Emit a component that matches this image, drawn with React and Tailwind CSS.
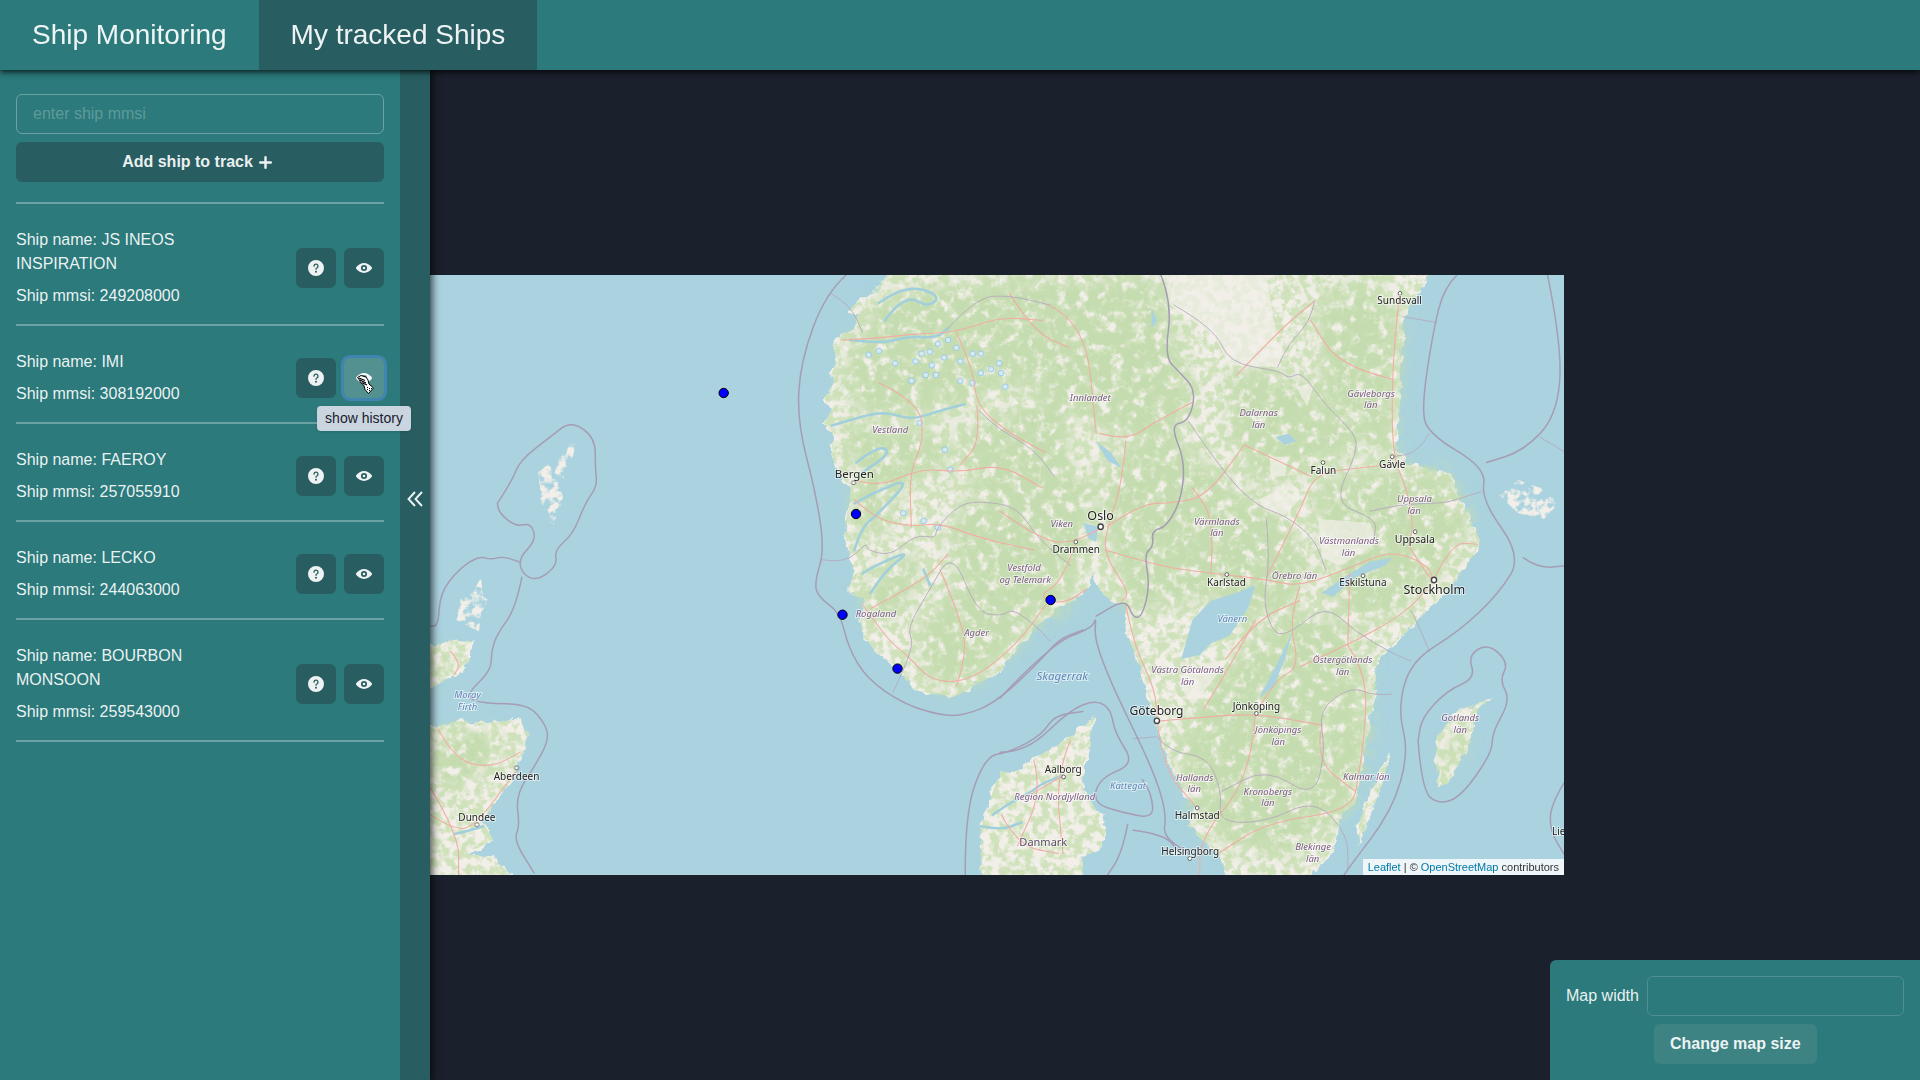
import React from 'react';

const ships = [
  { name: 'JS INEOS INSPIRATION', mmsi: '249208000' },
  { name: 'IMI', mmsi: '308192000', hovered: true },
  { name: 'FAEROY', mmsi: '257055910' },
  { name: 'LECKO', mmsi: '244063000' },
  { name: 'BOURBON MONSOON', mmsi: '259543000' },
];

function QuestionIcon() {
  return (
    <svg viewBox="0 0 24 24" className="w-4 h-4" fill="currentColor">
      <path d="M12,0A12,12,0,1,0,24,12,12.013,12.013,0,0,0,12,0Zm0,19a1.5,1.5,0,1,1,1.5-1.5A1.5,1.5,0,0,1,12,19Zm1.6-6.08a1,1,0,0,0-.6.917,1,1,0,1,1-2,0,3,3,0,0,1,1.8-2.75A2,2,0,1,0,10,9.255a1,1,0,1,1-2,0,4,4,0,1,1,5.6,3.666Z" />
    </svg>
  );
}

function ViewIcon() {
  return (
    <svg viewBox="0 0 24 24" className="w-4 h-4" fill="currentColor">
      <path d="M23.432,10.524C20.787,7.614,16.4,4.538,12,4.6,7.6,4.537,3.213,7.615.568,10.524a2.211,2.211,0,0,0,0,2.948C3.182,16.351,7.507,19.4,11.839,19.4h.308c4.347,0,8.671-3.049,11.288-5.929A2.21,2.21,0,0,0,23.432,10.524ZM7.4,12A4.6,4.6,0,1,1,12,16.6,4.6,4.6,0,0,1,7.4,12Z" />
      <circle cx="12" cy="12" r="2" />
    </svg>
  );
}

function AddIcon() {
  return (
    <svg viewBox="0 0 13 13" className="w-[13px] h-[13px] ml-[6px] mr-[6px] inline-block align-[-2px]" fill="none" stroke="currentColor" strokeWidth="2.4" strokeLinecap="round">
      <path d="M1.2 6.5 H11.8 M6.5 1.2 V11.8" />
    </svg>
  );
}

// the pointer hand of the mouse, caught in the screenshot
function HandCursor() {
  return (
    <svg viewBox="0 0 17 19" className="absolute left-[13px] top-[17px] w-[17px] h-[19px]">
      <path d="M0.5 2.5 L4 0.5 L9 2 L11 5 L12 9 L16.5 13 L11.5 18.5 L8 14.5 L7 10.5 L3.5 7.5 L2.5 5 Z" fill="#fff" stroke="#000" strokeWidth="1" strokeLinejoin="round" />
      <path d="M2 3 L8 5.5 M3 5 L9 8 M4.5 7.5 L10 10" stroke="#000" strokeWidth="1.2" />
      <path d="M10 12 h1 v1 h-1z M12 13 h1 v1 h-1z M10 14 h1 v1 h-1z M12 15 h1 v1 h-1z M14 13 h1 v1 h-1z" fill="#000" />
    </svg>
  );
}

function ChevronsIcon() {
  return (
    <svg viewBox="0 0 16 16" className="w-4 h-4" fill="none" stroke="currentColor" strokeWidth="1.9">
      <path d="M8 1 L1.5 8 L8 15 M15 1 L8.5 8 L15 15" />
    </svg>
  );
}

function ShipRow({ ship }) {
  return (
    <div className="flex items-center justify-between pt-6 pb-4 border-b-2 border-[#6ba2a3]">
      <div className="w-[190px] text-base leading-6">
        <p>Ship name: {ship.name}</p>
        <p className="mt-2">Ship mmsi: {ship.mmsi}</p>
      </div>
      <div className="flex gap-2">
        <button className="w-10 h-10 rounded-md bg-[#285e61] flex items-center justify-center">
          <QuestionIcon />
        </button>
        <div className="relative">
          {ship.hovered ? (
            <>
              <button className="relative w-10 h-10 rounded-md bg-[#539090] ring-[3px] ring-[#3f85b0] flex items-center justify-center">
                <ViewIcon />
                <HandCursor />
              </button>
              <div className="absolute z-20 top-[48px] left-[-27px] w-[94px] h-[25px] rounded-sm bg-[#cbd5e0] text-[#1a202c] text-sm leading-[25px] text-center shadow-sm">
                show history
              </div>
            </>
          ) : (
            <button className="w-10 h-10 rounded-md bg-[#285e61] flex items-center justify-center">
              <ViewIcon />
            </button>
          )}
        </div>
      </div>
    </div>
  );
}

function Sidebar() {
  return (
    <aside className="relative z-10 flex w-[430px] shrink-0 shadow-[0_0_8px_2px_rgba(0,0,0,0.75)]">
      <div className="w-[400px] bg-[#2c7a7b] px-4 pt-6">
        <input
          placeholder="enter ship mmsi"
          className="block w-full h-10 px-4 rounded-md border border-[#6ba2a3] bg-transparent text-base outline-none placeholder:text-[#5f9a9b]"
        />
        <button className="block w-full h-10 mt-2 rounded-md bg-[#285e61] font-semibold text-base">
          Add ship to track
          <AddIcon />
        </button>
        <div className="mt-5 border-b-2 border-[#6ba2a3]" />
        {ships.map((ship) => (
          <ShipRow key={ship.mmsi} ship={ship} />
        ))}
      </div>
      <div className="w-[30px] bg-[#285e61] flex justify-center pt-[421px]">
        <ChevronsIcon />
      </div>
    </aside>
  );
}

const toPoints = (list) => list.map((p) => p.join(',')).join(' ');

// rounds the corners of a hand-read outline
const smooth = (pts) => {
  let d = `M${pts[0][0]} ${pts[0][1]}`;
  for (let i = 1; i < pts.length - 1; i++) {
    const mx = (pts[i][0] + pts[i + 1][0]) / 2;
    const my = (pts[i][1] + pts[i + 1][1]) / 2;
    d += ` Q${pts[i][0]} ${pts[i][1]} ${mx} ${my}`;
  }
  const last = pts[pts.length - 1];
  return `${d} L${last[0]} ${last[1]}`;
};

// Coordinates are read off two crops of the map, so each side has its own group
const westLand = [
  [[1120,13],[1095,50],[1060,70],[1030,100],[1050,140],[1010,165],[985,195],[1000,230],[985,265],[990,290],[965,330],[985,360],[965,395],[985,420],[985,480],[1000,520],[1030,560],[1030,600],[1020,640],[1015,690],[1030,740],[1040,780],[1022,830],[1060,845],[1070,870],[1055,900],[1060,940],[1100,990],[1145,1020],[1180,1075],[1230,1090],[1290,1095],[1340,1065],[1400,1030],[1440,970],[1490,910],[1530,870],[1560,850],[1560,0],[1120,0]],
  [[-30,975],[60,950],[105,955],[100,1000],[60,1045],[-30,1090]],
  [[-30,1180],[70,1160],[140,1165],[220,1155],[245,1195],[225,1250],[210,1300],[170,1350],[130,1420],[155,1465],[90,1500],[150,1510],[215,1570],[-30,1570]],
  [[1350,1570],[1350,1430],[1390,1310],[1450,1280],[1520,1230],[1600,1180],[1600,1570]],
];

const westIslands = [
  [[265,520],[295,495],[300,540],[318,480],[335,470],[340,445],[358,445],[350,480],[335,510],[320,560],[330,605],[310,630],[300,670],[290,620],[255,580],[270,560]],
  [[75,845],[105,830],[125,790],[130,840],[145,850],[125,880],[120,930],[65,900]],
];

const westForest = [
  [[1110,60],[1300,30],[1568,30],[1568,330],[1400,300],[1300,360],[1180,380],[1050,370],[1010,300],[1030,190]],
  [[1000,400],[1200,400],[1280,440],[1250,520],[1160,560],[1110,680],[1040,680],[1040,520]],
  [[1290,420],[1568,300],[1568,880],[1500,900],[1420,980],[1340,1060],[1260,1085],[1200,1030],[1190,920],[1300,780],[1260,690],[1320,560],[1400,590],[1290,520]],
  [[1060,800],[1180,720],[1210,760],[1150,890],[1070,900]],
  [[20,1190],[150,1180],[180,1240],[120,1310],[30,1340],[0,1260]],
  [[0,990],[45,975],[30,1050],[0,1070]],
];

const westFjords = [
  [[1100,85],[1140,55],[1200,45],[1250,70],[1220,95],[1180,70],[1140,95],[1115,130]],
  [[1030,180],[1110,190],[1170,170],[1240,175],[1270,150]],
  [[985,400],[1060,375],[1120,365],[1180,385],[1240,365],[1310,345]],
  [[1045,495],[1100,450],[1130,470],[1060,520]],
  [[1040,600],[1090,570],[1180,535],[1100,625],[1060,660],[1040,720]],
  [[1060,780],[1090,760],[1180,720],[1120,770],[1080,830]],
  [[1210,770],[1225,810]],
  [[60,1450],[100,1440],[130,1430]],
  [[1380,1400],[1420,1370],[1470,1345],[1500,1320],[1550,1300]],
  [[1350,1430],[1400,1440],[1450,1420]],
];

const glacierDots = [
  [1190,235],[1205,215],[1225,210],[1245,190],[1270,180],[1290,200],[1260,225],[1230,245],[1215,270],[1180,285],[1240,270],[1300,235],[1330,215],[1350,215],[1350,265],[1375,255],[1395,240],[1400,265],[1330,290],[1075,218],[1100,208],[1140,240],[1275,513],[1200,393],[1262,462],[1210,645],[1245,662],[1160,625],[1410,300],[1300,285],
];

const westBorders = [
  [[1020,13],[970,60],[908,235],[900,390],[945,570],[967,720],[943,800],[950,840],[1005,880],[1025,970],[1070,1050],[1160,1115],[1250,1145],[1310,1145],[1390,1110],[1500,1000],[1540,950],[1600,925]],
  [[165,600],[200,545],[220,490],[300,425],[345,388],[405,430],[405,510],[410,555],[380,600],[350,680],[305,720],[312,760],[262,800],[225,780],[218,740],[260,695],[248,650],[210,660],[170,625],[165,600]],
  [[218,750],[180,735],[150,745],[120,735],[70,770],[25,830],[20,915],[0,915]],
  [[225,790],[210,870],[165,935],[150,980],[150,1030],[85,1095],[130,1115],[240,1115],[285,1170],[290,1210],[260,1270],[210,1350],[220,1430],[205,1465],[255,1550]],
  [[1312,1570],[1310,1400],[1360,1250],[1420,1240],[1500,1195],[1530,1145],[1600,1135]],
];

const westThinBorders = [
  [[985,62],[1030,90],[1060,160]],
  [[960,745],[1020,755],[1070,700],[1070,720],[1130,735],[1190,680],[1240,690],[1240,665],[1300,600],[1360,595],[1440,610],[1490,690],[1570,760]],
  [[1135,1085],[1160,1030],[1185,960],[1170,920],[1220,830],[1280,720],[1340,880],[1400,890],[1430,870],[1490,920],[1520,955]],
  [[1270,150],[1340,70],[1420,65],[1520,90]],
  [[1345,360],[1380,400],[1480,460],[1530,530]],
];

const westRoads = [
  [[1010,180],[1100,175],[1180,165],[1290,160],[1400,120],[1500,130]],
  [[1040,540],[1100,560],[1200,510],[1300,520],[1400,500],[1500,560]],
  [[1040,590],[1090,640],[1180,660],[1250,650],[1350,690],[1480,720]],
  [[1060,860],[1120,950],[1170,990],[1230,1060],[1330,1055],[1440,960],[1510,860]],
  [[1080,870],[1210,800],[1270,730]],
  [[1100,290],[1200,340],[1210,440],[1175,520],[1180,660]],
  [[1290,1070],[1320,980],[1290,870],[1250,770]],
  [[1340,350],[1350,440],[1300,500]],
  [[1290,160],[1330,250],[1340,350],[1420,420],[1510,470]],
  [[1420,60],[1480,160],[1568,200]],
  [[20,1180],[60,1260],[150,1280],[220,1240]],
  [[0,1400],[60,1440],[110,1430],[210,1290]],
  [[0,1330],[70,1450],[70,1560]],
  [[50,980],[75,1010],[60,1040]],
  [[1400,1400],[1440,1480],[1540,1500]],
  [[1480,1260],[1500,1340],[1440,1480]],
];

const eastLand = [
  [[-40,1000],[0,1025],[50,970],[100,900],[150,870],[190,855],[235,820],[255,780],[270,825],[300,850],[340,860],[340,930],[370,1000],[390,1060],[420,1150],[440,1220],[480,1310],[520,1380],[510,1430],[540,1460],[590,1500],[620,1570],[830,1570],[900,1490],[920,1400],[960,1370],[970,1310],[990,1200],[1010,1120],[1020,1000],[1100,930],[1180,850],[1250,780],[1300,700],[1260,620],[1210,520],[1100,500],[1070,450],[1080,350],[1080,280],[1090,120],[1160,13],[1170,0],[-40,0]],
  [[0,1290],[60,1290],[120,1270],[190,1200],[255,1150],[245,1190],[245,1240],[200,1300],[290,1430],[270,1490],[210,1510],[190,1570],[0,1570]],
  [[1180,1330],[1180,1200],[1240,1130],[1330,1100],[1290,1130],[1270,1220],[1210,1320]],
  [[970,1480],[970,1420],[1010,1320],[1055,1235],[1040,1300],[1010,1380]],
];

const aland = [[1350,580],[1400,540],[1460,560],[1510,600],[1470,640],[1400,625]];

const eastForest = [
  [[0,20],[430,20],[530,310],[510,390],[400,440],[270,420],[130,300],[0,240]],
  [[0,440],[170,490],[250,560],[240,720],[200,830],[120,870],[50,960],[0,1010]],
  [[260,500],[460,398],[600,530],[700,600],[780,640],[840,760],[800,860],[700,900],[640,920],[590,840],[460,860],[350,890],[300,760]],
  [[610,270],[740,240],[780,290],[830,280],[870,350],[960,410],[960,470],[830,520],[700,560],[620,440]],
  [[850,60],[1000,20],[1090,130],[1075,300],[1070,470],[1000,480],[960,400],[860,330]],
  [[870,530],[1040,510],[1200,510],[1280,640],[1200,780],[1080,880],[950,910],[870,820],[900,730],[840,630]],
  [[700,930],[800,870],[900,900],[1000,970],[990,1060],[1000,1210],[950,1380],[800,1500],[640,1500],[520,1400],[470,1230],[560,1060]],
  [[1190,1250],[1250,1180],[1260,1220],[1200,1300]],
];

const eastPale = [
  [[470,13],[720,13],[760,250],[620,245],[580,170],[460,90]],
  [[700,590],[760,560],[810,590],[770,630],[720,620]],
  [[730,480],[780,480],[770,530],[730,530]],
  [[860,640],[1000,650],[1020,700],[920,760],[870,740]],
  [[560,1010],[620,1000],[520,1120],[480,1060]],
  [[800,300],[850,290],[830,350]],
];

const eastLakes = [
  [[490,1000],[520,900],[570,850],[640,830],[690,810],[670,870],[620,940],[570,960],[540,990]],
  [[700,1100],[750,1010],[790,930],[770,1000],[740,1070]],
  [[745,430],[780,420],[800,440],[770,450]],
  [[870,830],[930,790],[1000,750],[1060,740],[1040,760],[960,790],[900,840]],
  [[260,440],[300,470],[330,510],[290,490]],
  [[225,650],[265,660],[260,700],[240,690]],
  [[410,100],[425,130],[410,150]],
];

const eastBorders = [
  [[435,13],[465,85],[445,225],[485,262],[530,310],[510,390],[460,398],[500,490],[490,590],[450,660],[410,670],[415,710],[390,730],[405,810],[385,890],[360,895],[340,845],[260,890]],
  [[1235,13],[1200,45],[1170,160],[1140,350],[1155,420],[1315,510],[1300,590],[1410,735],[1350,830],[1240,930],[1110,1005],[1075,1130],[1105,1240],[1060,1390],[940,1540],[920,1570]],
  [[1480,13],[1520,200],[1505,375],[1415,465],[1315,495]],
  [[1415,740],[1455,767],[1530,760]],
  [[1130,1210],[1140,1340],[1190,1375],[1250,1350],[1330,1240],[1330,1190],[1380,1105],[1350,1055],[1375,1010],[1320,960],[1265,990],[1285,1050],[1210,1080],[1140,1150],[1130,1210]],
  [[0,1100],[140,960],[250,920],[260,890],[255,950],[300,1060],[345,1150],[420,1300],[450,1400],[440,1455],[510,1500]],
  [[0,1240],[70,1240],[190,1130],[260,1105],[300,1130],[310,1190],[365,1270],[270,1305],[250,1370],[330,1395],[415,1410],[410,1350],[385,1310]],
  [[345,1425],[330,1500],[280,1570]],
  [[360,1440],[440,1450],[480,1490]],
  [[1530,1310],[1490,1370],[1485,1440],[1530,1510]],
];

const eastThinBorders = [
  [[470,90],[580,150],[620,240],[760,260],[780,280],[815,260],[880,350],[960,420],[965,470],[900,600],[1020,640],[1010,690]],
  [[1090,120],[1180,135]],
  [[850,80],[840,130],[780,190],[750,250]],
  [[510,390],[610,530],[700,610],[770,630],[850,690],[880,770]],
  [[720,640],[730,750],[710,850],[740,940],[790,930],[880,860],[960,930],[1060,985],[1110,1005]],
  [[1160,980],[1130,910],[1110,875]],
  [[1160,420],[1130,470],[1060,480]],
  [[1300,570],[1250,585],[1200,600],[1100,600],[1000,620]],
  [[1060,1090],[1010,1095],[950,1070],[860,1130],[880,1230],[850,1360],[720,1280],[600,1340]],
  [[1460,430],[1530,470]],
  [[425,1200],[460,1240],[560,1250],[600,1340],[590,1420],[720,1420],[850,1360],[940,1450],[940,1540]],
  [[360,1205],[420,1200]],
];

const eastRoads = [
  [[270,420],[340,440],[420,390],[520,340]],
  [[340,440],[330,550],[290,660],[280,730],[350,830],[330,850]],
  [[290,660],[380,600],[470,600],[560,580],[660,450]],
  [[285,720],[420,760],[570,780],[720,795],[810,815],[960,760],[1060,720],[1160,760],[1170,800]],
  [[810,815],[780,900],[810,1020],[750,1050],[690,1140]],
  [[1170,800],[1090,700],[1120,680],[1100,560],[1060,480],[1060,250],[1080,60]],
  [[1060,500],[950,510],[850,525],[810,620],[720,790]],
  [[425,1160],[540,1150],[690,1140],[870,1170]],
  [[690,1140],[680,1300],[540,1460],[540,1570]],
  [[425,1160],[440,1280],[530,1380]],
  [[810,1020],[940,965],[1100,880],[1170,800]],
  [[940,965],[945,780]],
  [[940,965],[985,1030],[990,1150],[970,1300],[950,1390],[720,1420],[590,1500]],
  [[340,860],[360,960],[420,1080],[425,1160]],
  [[610,1000],[690,900],[810,850]],
  [[570,780],[580,640],[520,560]],
  [[0,620],[120,700],[200,700],[280,660]],
  [[205,700],[170,800],[100,840],[170,860],[235,820]],
  [[130,90],[230,130],[260,420]],
  [[190,1210],[150,1300],[170,1500]],
  [[80,1350],[170,1300]],
  [[640,270],[760,150],[850,80]],
  [[1060,280],[920,250],[840,130]],
  [[660,450],[840,530]],
  [[1170,800],[1220,700],[1290,705]],
  [[870,1170],[850,1260],[960,1340]],
  [[550,1130],[620,1020],[690,900]],
];

const westLabels = [
  { t: 'Bergen', x: 1040, y: 534, s: 11.5, kind: 'city' },
  { t: 'Aberdeen', x: 212, y: 1310, s: 10, kind: 'city' },
  { t: 'Dundee', x: 115, y: 1416, s: 10, kind: 'city' },
  { t: 'Vestland', x: 1128, y: 420, s: 9.5, kind: 'region' },
  { t: 'Rogaland', x: 1093, y: 891, s: 9.5, kind: 'region' },
  { t: 'Agder', x: 1340, y: 941, s: 9.5, kind: 'region' },
  { t: 'Moray', x: 92, y: 1100, s: 9.5, kind: 'sea' },
  { t: 'Firth', x: 92, y: 1131, s: 9.5, kind: 'sea' },
];

const eastLabels = [
  { t: 'Sundsvall', x: 1080, y: 88, s: 10, kind: 'city' },
  { t: 'Oslo', x: 272, y: 643, s: 12.5, kind: 'city' },
  { t: 'Drammen', x: 206, y: 727, s: 10, kind: 'city' },
  { t: 'Falun', x: 874, y: 524, s: 10, kind: 'city' },
  { t: 'Gävle', x: 1060, y: 510, s: 10, kind: 'city' },
  { t: 'Uppsala', x: 1121, y: 702, s: 10.5, kind: 'city' },
  { t: 'Karlstad', x: 612, y: 813, s: 10, kind: 'city' },
  { t: 'Eskilstuna', x: 981, y: 813, s: 10, kind: 'city' },
  { t: 'Stockholm', x: 1174, y: 834, s: 12.5, kind: 'city' },
  { t: 'Göteborg', x: 423, y: 1145, s: 12, kind: 'city' },
  { t: 'Jönköping', x: 693, y: 1132, s: 10, kind: 'city' },
  { t: 'Aalborg', x: 171, y: 1292, s: 10, kind: 'city' },
  { t: 'Halmstad', x: 533, y: 1411, s: 10, kind: 'city' },
  { t: 'Helsingborg', x: 514, y: 1505, s: 10, kind: 'city' },
  { t: 'Danmark', x: 117, y: 1482, s: 11, kind: 'country' },
  { t: 'Lie', x: 1510, y: 1452, s: 10, kind: 'city' },
  { t: 'Innlandet', x: 244, y: 338, s: 9.5, kind: 'region' },
  { t: 'Viken', x: 167, y: 661, s: 9.5, kind: 'region' },
  { t: 'Vestfold', x: 65, y: 774, s: 9.5, kind: 'region' },
  { t: 'og Telemark', x: 68, y: 805, s: 9.5, kind: 'region' },
  { t: 'Dalarnas', x: 699, y: 375, s: 9.5, kind: 'region' },
  { t: 'län', x: 699, y: 406, s: 9.5, kind: 'region' },
  { t: 'Gävleborgs', x: 1003, y: 326, s: 9.5, kind: 'region' },
  { t: 'län', x: 1002, y: 356, s: 9.5, kind: 'region' },
  { t: 'Uppsala', x: 1120, y: 597, s: 9.5, kind: 'region' },
  { t: 'län', x: 1119, y: 628, s: 9.5, kind: 'region' },
  { t: 'Värmlands', x: 586, y: 655, s: 9.5, kind: 'region' },
  { t: 'län', x: 586, y: 685, s: 9.5, kind: 'region' },
  { t: 'Västmanlands', x: 943, y: 704, s: 9.5, kind: 'region' },
  { t: 'län', x: 942, y: 734, s: 9.5, kind: 'region' },
  { t: 'Örebro län', x: 796, y: 794, s: 9.5, kind: 'region' },
  { t: 'Västra Götalands', x: 507, y: 1036, s: 9.5, kind: 'region' },
  { t: 'län', x: 507, y: 1067, s: 9.5, kind: 'region' },
  { t: 'Östergötlands', x: 926, y: 1009, s: 9.5, kind: 'region' },
  { t: 'län', x: 926, y: 1040, s: 9.5, kind: 'region' },
  { t: 'Jönköpings', x: 752, y: 1191, s: 9.5, kind: 'region' },
  { t: 'län', x: 752, y: 1221, s: 9.5, kind: 'region' },
  { t: 'Gotlands', x: 1244, y: 1159, s: 9.5, kind: 'region' },
  { t: 'län', x: 1244, y: 1190, s: 9.5, kind: 'region' },
  { t: 'Hallands', x: 526, y: 1313, s: 9.5, kind: 'region' },
  { t: 'län', x: 525, y: 1343, s: 9.5, kind: 'region' },
  { t: 'Kronobergs', x: 724, y: 1349, s: 9.5, kind: 'region' },
  { t: 'län', x: 724, y: 1379, s: 9.5, kind: 'region' },
  { t: 'Kalmar län', x: 990, y: 1312, s: 9.5, kind: 'region' },
  { t: 'Blekinge', x: 846, y: 1492, s: 9.5, kind: 'region' },
  { t: 'län', x: 845, y: 1522, s: 9.5, kind: 'region' },
  { t: 'Region Nordjylland', x: 148, y: 1363, s: 9.5, kind: 'region' },
  { t: 'Skagerrak', x: 168, y: 1055, s: 11.5, kind: 'sea' },
  { t: 'Kattegat', x: 346, y: 1335, s: 9.5, kind: 'sea' },
  { t: 'Vänern', x: 628, y: 905, s: 9.5, kind: 'sea' },
];

const townDots = [
  [1081,60,0],[873,495,0],[1060,480,0],[1122,673,0],[613,783,0],[981,786,0],[205,699,0],[533,1383,0],[172,1303,0],
  [272,660,1],[1173,797,1],[424,1159,1],[693,1140,0],[513,1513,0],
];

function MapLabel({ label, scaleX, scaleY }) {
  const color = label.kind === 'region' ? '#7d5a86' : label.kind === 'sea' ? '#5f86b8' : label.kind === 'country' ? '#5c4a68' : '#222';
  return (
    <text
      transform={`translate(${label.x} ${label.y}) scale(${1 / scaleX} ${1 / scaleY})`}
      textAnchor="middle"
      fontFamily="'Noto Sans', sans-serif"
      fontSize={label.s}
      fontStyle={label.kind === 'region' || label.kind === 'sea' ? 'italic' : 'normal'}
      fill={color}
      stroke="rgba(255,255,255,0.55)"
      strokeWidth="2"
      paintOrder="stroke"
    >
      {label.t}
    </text>
  );
}

const WEST = { transform: 'translate(430 270) scale(0.408 0.389)', x: 0.408, y: 0.389 };
const EAST = { transform: 'translate(1000 270) scale(0.37 0.389)', x: 0.37, y: 0.389 };

function Lines({ list, stroke, width }) {
  return list.map((p, i) => (
    <path key={i} d={smooth(p)} fill="none" stroke={stroke} strokeWidth={width} strokeLinejoin="round" strokeLinecap="round" vectorEffect="non-scaling-stroke" />
  ));
}

function MapArt() {
  const markers = [[723.7,393],[856,514],[842.5,614.7],[897.5,668.6],[1050.6,600]];
  const land = (list) => list.map((p, i) => <polygon key={i} points={toPoints(p)} />);
  return (
    <svg viewBox="430 275 1134 600" className="block w-full h-full">
      <defs>
        <filter id="coast" x="-5%" y="-5%" width="110%" height="110%">
          <feTurbulence type="fractalNoise" baseFrequency="0.09" numOctaves="3" seed="7" result="n" />
          <feDisplacementMap in="SourceGraphic" in2="n" scale="11" xChannelSelector="R" yChannelSelector="G" />
        </filter>
        <filter id="forest" x="-5%" y="-5%" width="110%" height="110%">
          <feGaussianBlur in="SourceGraphic" stdDeviation="9" result="soft" />
          <feTurbulence type="fractalNoise" baseFrequency="0.09" numOctaves="4" seed="4" />
          <feColorMatrix values="0 0 0 0 0  0 0 0 0 0  0 0 0 0 0  0 0 0 -4.5 3.1" />
          <feComposite in="soft" operator="in" />
        </filter>
        <filter id="specks" x="-5%" y="-5%" width="110%" height="110%">
          <feTurbulence type="fractalNoise" baseFrequency="0.12" numOctaves="4" seed="11" result="n" />
          <feColorMatrix in="n" values="0 0 0 0 0  0 0 0 0 0  0 0 0 0 0  0 0 0 -5 3" />
          <feComposite in="SourceGraphic" operator="in" />
        </filter>
        <filter id="soften" x="0" y="0" width="100%" height="100%">
          <feGaussianBlur stdDeviation="0.3" />
        </filter>
      </defs>
      <rect x="430" y="275" width="1134" height="600" fill="#aad3df" />
      <g filter="url(#soften)">
        <g filter="url(#coast)" fill="#f2efe9">
          <g transform={WEST.transform}>{land(westLand)}</g>
          <g transform={EAST.transform}>{land(eastLand)}</g>
        </g>
        <g filter="url(#specks)" fill="#f2efe9">
          <g transform={WEST.transform}>{land(westIslands)}</g>
          <polygon transform={EAST.transform} points={toPoints(aland)} />
        </g>
        <g filter="url(#specks)" fill="#cfe2bb">
          <g transform={WEST.transform}>{land(westLand)}</g>
          <g transform={EAST.transform}>{land(eastLand)}</g>
        </g>
        <g filter="url(#forest)" fill="#c4dcaf">
          <g transform={WEST.transform}>{land(westForest)}</g>
          <g transform={EAST.transform}>{land(eastForest)}</g>
        </g>
        <g transform={EAST.transform} fill="#f2efe9" opacity="0.7">{land(eastPale)}</g>
        <g transform={WEST.transform}>
          <Lines list={westFjords} stroke="#a2cfdc" width={2.6} />
          {glacierDots.map(([x, y], i) => (
            <circle key={i} cx={x} cy={y} r="7" fill="#d5e9ef" stroke="#93c7ec" strokeWidth="0.9" vectorEffect="non-scaling-stroke" />
          ))}
        </g>
        <g transform={EAST.transform} fill="#aad3df">{land(eastLakes)}</g>
        <g transform={WEST.transform}>
          <Lines list={westRoads} stroke="#f0aea4" width={1.1} />
          <Lines list={westThinBorders} stroke="#b5a9bd" width={0.9} />
          <Lines list={westBorders} stroke="#a69db5" width={1.5} />
        </g>
        <g transform={EAST.transform}>
          <Lines list={eastRoads} stroke="#f0aea4" width={1.1} />
          <Lines list={eastThinBorders} stroke="#b5a9bd" width={0.9} />
          <Lines list={eastBorders} stroke="#a69db5" width={1.5} />
        </g>
      </g>
      <g transform={WEST.transform}>
        {westLabels.map((l) => <MapLabel key={l.t} label={l} scaleX={WEST.x} scaleY={WEST.y} />)}
        <circle cx="1038" cy="547" r="5" fill="#fff" stroke="#555" strokeWidth="0.8" vectorEffect="non-scaling-stroke" />
        <circle cx="212" cy="1280" r="5" fill="#fff" stroke="#555" strokeWidth="0.8" vectorEffect="non-scaling-stroke" />
        <circle cx="115" cy="1426" r="5" fill="#fff" stroke="#555" strokeWidth="0.8" vectorEffect="non-scaling-stroke" />
      </g>
      <g transform={EAST.transform}>
        {townDots.map(([x, y, big], i) => (
          <circle key={i} cx={x} cy={y} r={big ? 7 : 5} fill="#fff" stroke="#444" strokeWidth={big ? 1.4 : 0.8} vectorEffect="non-scaling-stroke" />
        ))}
        {eastLabels.map((l) => <MapLabel key={l.t + l.x} label={l} scaleX={EAST.x} scaleY={EAST.y} />)}
      </g>
      {markers.map(([cx, cy]) => (
        <circle key={cx} cx={cx} cy={cy} r="4.7" fill="#0000ff" stroke="#000" strokeWidth="1" />
      ))}
    </svg>
  );
}

export default function App() {
  return (
    <div className="h-screen overflow-hidden flex flex-col bg-[#1a202c] text-[rgba(255,255,255,0.92)] font-['Liberation_Sans',Arial,sans-serif]">
      <nav className="relative z-20 flex h-[70px] shrink-0 bg-[#2c7a7b] shadow-[0_2px_6px_rgba(0,0,0,0.8)] text-[28px]">
        <a className="px-8 leading-[70px]">Ship Monitoring</a>
        <a className="px-8 leading-[70px] bg-[#285e61]">My tracked Ships</a>
      </nav>
      <div className="relative flex flex-1 min-h-0">
        <Sidebar />
        <main className="flex-1 flex items-center">
          <div className="relative w-[1134px] h-[600px] overflow-hidden">
            <MapArt />
            <div className="absolute right-0 bottom-0 px-[5px] h-[16px] leading-[16px] bg-[rgba(255,255,255,0.8)] text-[11px] text-[#333]">
              <a className="text-[#0078a8]">Leaflet</a> | © <a className="text-[#0078a8]">OpenStreetMap</a> contributors
            </div>
          </div>
        </main>
        <div className="absolute right-0 bottom-0 z-10 w-[370px] h-[120px] rounded-tl-md bg-[#2c7a7b] p-4">
          <div className="flex items-center gap-2">
            <label className="text-base whitespace-nowrap">Map width</label>
            <input className="w-[257px] h-10 rounded-md border border-[#4f8f90] bg-transparent outline-none" />
          </div>
          <div className="flex mt-2 pl-[88px]">
            <button className="h-10 px-4 rounded-md bg-[#3e8383] font-semibold text-base">Change map size</button>
          </div>
        </div>
      </div>
    </div>
  );
}
